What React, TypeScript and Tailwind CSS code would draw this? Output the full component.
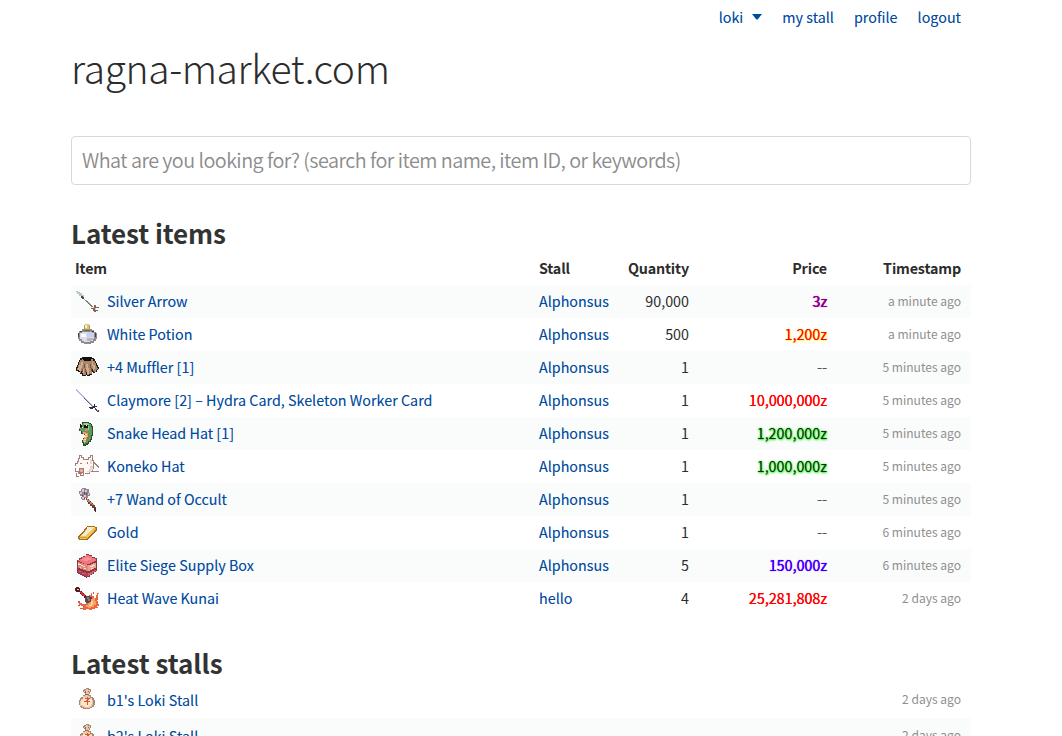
import type { ReactNode } from "react";

function Sprite({ children }: { children: ReactNode }) {
  return (
    <svg className="h-6 w-6 shrink-0" viewBox="0 0 24 24" shapeRendering="crispEdges" fill="none" aria-hidden="true">
      {children}
    </svg>
  );
}

const sprites: Record<string, ReactNode> = {
  arrow: (
    <>
      <path d="M1 1L21 20" stroke="#a5a1a0" strokeWidth="0.9" />
      <path d="M1 1h2v1h2v1h2v2h2v4H7V8H6V6H4V4H2V2H1z" fill="#b9c3c4" />
      <path d="M6 6h2v1h1v2H7V8H6z" fill="#454b50" />
      <path d="M10 10L19 18" stroke="#857c7b" strokeWidth="1.2" />
      <path d="M19 15h2v2h3v1h-3v2h2v1h-2v1h-2v-1h-1v-2h-2v-1h3z" fill="#87605c" />
      <path d="M20 18h1v2h-1zM18 17h1v1h-1z" fill="#e5c6bd" />
    </>
  ),
  potion: (
    <>
      <path d="M7 6h2v2h6V6h2v1h2v2h2v1h1v6h-1v2h-2v2h-3v1H9v-1H6v-2H4v-2H3v-6h1V8h3z" fill="#8d8d91" />
      <path d="M3 10h1v4H3zM20 10h1v4h-1zM5 8h2v1H5zM17 8h2v1h-2z" fill="#3f4147" />
      <path d="M7 9h10v1h2v6h-1v2h-3v1H9v-1H7v-2H5v-6h2z" fill="#dddde6" />
      <path d="M6 11h5v3H6z" fill="#fff" />
      <path d="M12 9h5v2h2v3h-7z" fill="#cecced" />
      <path d="M12 15h6v2h-2v1h-4z" fill="#b5b5c1" />
      <path d="M9 2h6v5H9z" fill="#ad955f" />
      <path d="M10 1h4v5h-4z" fill="#dfc477" />
      <path d="M10 2h2v3h-2z" fill="#fff0b5" />
      <path d="M9 7h6v1H9z" fill="#547163" />
    </>
  ),
  muffler: (
    <>
      <path d="M7 1h10v1h2v1h1v2h1v2h1v2h1v2h1v2h-1v1h-1v2h-2v1h-2v-1h-1v3h-2v1h-3v-1h-1v1H7v-2H5v-2H3v-1H1v-4h1V9h1V6h1V4h1V2h2z" fill="#211a17" />
      <path d="M7 3h2v2h7V3h2v2h2v2h1v3h1v2h1v1h-1v1h-1v2h-2v-1h-1v-2h-1v5h-3v1h-2v-3h-1v3H8v-2H7v-2H6v2H5v-2H4v-1H2v-2h1V9h1V6h1V4h2z" fill="#ab866b" />
      <path d="M6 6h2v3H7v3H6v3H4v-1H3v-2h1V9h2zM11 8h2v4h1v6h-2v-4h-1zM17 6h1v3h2v4h-1v1h-1v-4h-1zM8 13h1v4H8z" fill="#d2ad8e" />
      <path d="M9 8h1v4H9zM7 13h1v3H7zM15 8h1v4h1v3h-1v-3h-1zM10 13h1v3h-1z" fill="#765345" />
      <path d="M8 1h8v3h-1v1H9V4H8z" fill="#0c0e0e" />
    </>
  ),
  claymore: (
    <>
      <path d="M1 1L19 19" stroke="#68637c" strokeWidth="1.2" />
      <path d="M1 0.5L9 8.5" stroke="#bbb7dd" strokeWidth="1" />
      <path d="M8 7L18 17" stroke="#a09bb9" strokeWidth="0.7" />
      <path d="M19 15h1v2h2v1h-2v1h-2v1h-3v-1h-1v-1h4v-1h1z" fill="#302b3f" />
      <path d="M20 19h1v1h1v1h2v2h-2v-1h-1v-1h-1z" fill="#5a3d4d" />
      <path d="M22 21h1v1h-1z" fill="#bd9ca7" />
    </>
  ),
  snake: (
    <>
      <path d="M7 0h7v1h2v1h1v2h1v10h-1v4h-1v2h-2v2h-1v1h-2v1H8v-3H7v-3h1v-2h2v-3H9v-1H6V9H4V6h1V2h2z" fill="#294b30" />
      <path d="M8 1h6v1h2v3h1v8h-1v4h-1v2h-2v2h-2v1H9v-3H8v-1h2v-3h1v-3h-1v-1H7V9H5V6h2V2h1z" fill="#5c9c59" />
      <path d="M9 1h4v1h1v1H9zM13 4h1v4h-1v1h-2V7h2z" fill="#a3d091" />
      <path d="M5 2h2v3H5zM9 3h4v3H9z" fill="#101412" />
      <path d="M6 2h1v1H6zM11 3h1v1h-1zM7 5h1v1H7z" fill="#fff" />
      <path d="M4 6h2v1H4zM10 7h3v2h-3z" fill="#ee7777" />
      <path d="M8 10h3v1h2v4h-1v2h-1v3h-1v1H9v-1H8v-3h1v-2h1v-3H8z" fill="#e5a36b" />
      <path d="M10 12h2v1h-2zM10 14h2v1h-2zM9 17h2v1H9zM9 19h1v1H9z" fill="#ffe0a1" />
      <path d="M13 12h1v3h-1v2h-1v-2h1z" fill="#bf5546" />
    </>
  ),
  koneko: (
    <>
      <path d="M4 1h2v2h2v2h6V3h2V1h1v3h1v4h1v3h3v5h-5v1h-4v2h-3v-1H8v2H6v-2H4v-4H1v-7h1V6h1z" fill="#fff8f5" />
      <path
        d="M3.5 7V3.500H4.500V.5H6.500V2.500H8.500V4.500H13.500V2.500H15.500V.5H17.500V5.500H18.500V13.500H17.500V16.500H14.500V18.500H10M9 17.500H8.500V20.500H5.500V18.500H3.500V16.500H.5V13M.5 11V8.500H2.500V6M18 7.500h1v1h1v1h1v1h1v1h1v1M18 16.500h6"
        stroke="#a38080"
        strokeWidth="1"
      />
      <path d="M5 8h2v1H5zM12 7h1v2h-1zM1 18h1v3h2v1H1zM4 13h5v5H7v1H4z" fill="#a87972" />
      <path d="M5 14h3v3H5z" fill="#eba899" />
      <path d="M15 4h2v5h-2zM15 11h3v4h-2v2h-4v-1h2v-2h1z" fill="#e7d5ce" />
    </>
  ),
  wand: (
    <>
      <path d="M11 10h1v1h2v2h2v2h2v2h2v2h1v5h-1v-1h-1v-3h-2v-2h-2v-2h-2v-2h-1v-2h-1z" fill="#713d37" />
      <path d="M12 11h1v1h2v2h2v2h2v1h-2v-1h-2v-2h-2v-1h-1z" fill="#c58a70" />
      <path d="M7 0h4v1h3v4h1v3h-2v2h-3v2H7v-1H6V9h1V8H5V6H4V3h2V1h1z" fill="#94838f" />
      <path d="M7 1h2v3H7v2H5V4h2zM10 2h2v2h-2zM9 7h2v2H9v2H7V9h2zM13 5h1v2h-1z" fill="#d8c9d4" />
      <path d="M9 4h1v2H9zM11 5h1v2h-1zM7 7h1v1H7zM9 10h1v1H9z" fill="#5e5063" />
      <path d="M19 20h2v4h-1v-2h-1z" fill="#4a2f30" />
    </>
  ),
  gold: (
    <>
      <path d="M12 5h8v1h2v4h-1v1h-1v1h-1v1h-1v1h-1v1h-1v1h-1v1h-1v1h-1v1H4v-1H3v-3h1v-1h1v-1h1v-1h1v-1h1v-1h1V8h1V7h1V6h1z" fill="#a9691f" />
      <path d="M12 6h8v1h1v2h-1v1h-1v1h-1v1h-1v1h-1v1h-1v1h-1v1h-1v1h-1v1H5v-1H4v-1h1v-1h1v-1h1v-1h1v-1h1v-1h1V9h1V8h1z" fill="#efc554" />
      <path d="M12 6h7v1h-1v1h-1v1h-1v1h-1v1h-1v1h-1v1h-1v1h-1v1H6v-1h1v-1h1v-1h1v-1h1v-1h1V9h1z" fill="#f8eab9" />
      <path d="M13 7h4v1h-1v1h-1v1h-1v1h-1v1h-1v1H9v-1h1v-1h1v-1h1V9h1z" fill="#eee9e6" />
      <path d="M4 16h8v1H4zM20 7h1v2h-1v1h-1V9h1z" fill="#d39b32" />
    </>
  ),
  box: (
    <>
      <path d="M11 0h3v1h3v2h3v1h2v13h-1v1h-2v2h-2v1h-2v2h-3v1h-1v-1H9v-1H7v-1H5v-1H3v-1H2V6h2V4h2V3h2V2h3z" fill="#8a3445" />
      <path d="M11 1h3v1h3v2h3v1h1v2h-2v1h-2v1h-2v1h-3v1h-1v-1H9V9H7V8H5V7H3V6h2V5h2V3h3V2h1z" fill="#f0777f" />
      <path d="M11 3h3v1h2v2h-3v1H9V6H7V5h2V4h2z" fill="#fa9295" />
      <path d="M3 8h2v1h3v1h3v1h2v6h-2v-1H8v-1H5v-1H3z" fill="#e88480" />
      <path d="M13 11h3v-1h2V9h3v5h-2v1h-2v1h-2v1h-2z" fill="#ef9f92" />
      <path d="M3 9h1v1h2v1h2v1h2v1H8v-1H6v-1H3zM15 12h2v-1h3v1h-2v1h-3zM5 13h1v1H5zM9 14h2v1H9zM15 15h1v-1h2v1z" fill="#ffe4c2" />
      <path d="M3 16h2v1h3v1h3v1h2v4h-1v-1H9v-1H7v-1H5v-1H3z" fill="#b33d51" />
      <path d="M13 19h2v-1h2v-1h2v-1h2v1h-1v1h-2v2h-2v1h-2v1h-1z" fill="#cf6072" />
      <path d="M4 17h2v1H4zM7 19h4v1H7z" fill="#d15b6b" />
    </>
  ),
  kunai: (
    <>
      <path d="M1 0h3v1h1v3h2v2h2v2h2v3H9V9H7V7H5V5H1V4H0V1h1z" fill="#571c1d" />
      <path d="M2 2h2v1H2z" fill="#eac0ba" />
      <path d="M5 4h1v1h2v2h2v2H8V8H6V6H5z" fill="#d4342d" />
      <path d="M15 8h1V6h1v3h2v2h2V8h1V6h2v1h-1v4h-1v3h1v3h1v2h-2v1h1v1h-3v1h-3v1h-3v-1h-3v1H8v-1H6v-1h2v-2H6v-1H4v-2h3v1h4v-4h2v-4z" fill="#ea6743" />
      <path d="M16 12h2v-1h2v3h1v4h-2v2h-3v1h-3v-1h-2v-2h2v-2h2v-2h1z" fill="#f9a066" />
      <path d="M17 14h1v3h-1v2h-3v-1h2v-4z" fill="#ffdf98" />
      <path d="M11 9h4v1h2v2h-1v3h-2v1h-3v-1h-1v-5h1z" fill="#5a4850" />
      <path d="M12 10h2v2h1v2h-2v-2h-1z" fill="#94777a" />
      <path d="M3 14h2v2H3zM3 18h2v1H3zM18 5h1v2h-1zM22 11h1v2h-1zM5 21h3v1H5z" fill="#c95b49" />
    </>
  ),
  bag: (
    <>
      <path d="M9 1h2V0h3v1h2v3h-1v2h-1v1h2v2h2v1h1v2h1v5h-1v2h-2v1h-2v1H8v-1H6v-1H5v-2H4v-5h1v-2h1V9h2V7h2V5H9V4H8V2h1z" fill="#aa8873" />
      <path d="M10 2h1V1h2v1h2v2h-1v2h-1v2h2v2h2v2h1v5h-1v2h-2v1H9v-1H7v-1H5v-5h1v-2h2V8h2V6h1V4H9V3h1z" fill="#e8c6a7" />
      <path d="M8 10h7v1h2v5h-1v2h-2v1h-4v-1H8v-1H6v-5h2z" fill="#ffe6c8" />
      <path d="M10 3h1v2h-1zM13 3h1v1h-1zM10 6h3v1h-3z" fill="#8c6759" />
      <path d="M10 10h2V9h1v1h2v1h-1v1h-1v1h2v1h-2v3h-1v-3H9v-1h2v-1h1v-1h-2z" fill="#dc5137" />
    </>
  ),
};

const tones: Record<string, string> = {
  purple: "text-[#800080] [text-shadow:0.5px_0_0_#800080,0_0_1px_#ff00ff]",
  orange: "text-[#ff0000] [text-shadow:0.3px_0_0_#ff000066,0_0_1px_#ffdd00,1px_1px_1px_#ffff0099]",
  muted: "text-[#555] [text-shadow:0.3px_0_0_#777]",
  red: "text-[#ff0000] [text-shadow:0.3px_0_0_#ff0000]",
  green: "text-[#222] [text-shadow:0_0_2px_#00ff00,0.5px_0.5px_2px_#00ff00]",
  blue: "text-[#2200ff] [text-shadow:0.3px_0_0_#2200ff99,0_0_1px_#ff00ff]",
};

const items = [
  { icon: "arrow", name: "Silver Arrow", stall: "Alphonsus", qty: "90,000", price: "3z", tone: "purple", time: "a minute ago" },
  { icon: "potion", name: "White Potion", stall: "Alphonsus", qty: "500", price: "1,200z", tone: "orange", time: "a minute ago" },
  { icon: "muffler", name: "+4 Muffler [1]", stall: "Alphonsus", qty: "1", price: "--", tone: "muted", time: "5 minutes ago" },
  { icon: "claymore", name: "Claymore [2] – Hydra Card, Skeleton Worker Card", stall: "Alphonsus", qty: "1", price: "10,000,000z", tone: "red", time: "5 minutes ago" },
  { icon: "snake", name: "Snake Head Hat [1]", stall: "Alphonsus", qty: "1", price: "1,200,000z", tone: "green", time: "5 minutes ago" },
  { icon: "koneko", name: "Koneko Hat", stall: "Alphonsus", qty: "1", price: "1,000,000z", tone: "green", time: "5 minutes ago" },
  { icon: "wand", name: "+7 Wand of Occult", stall: "Alphonsus", qty: "1", price: "--", tone: "muted", time: "5 minutes ago" },
  { icon: "gold", name: "Gold", stall: "Alphonsus", qty: "1", price: "--", tone: "muted", time: "6 minutes ago" },
  { icon: "box", name: "Elite Siege Supply Box", stall: "Alphonsus", qty: "5", price: "150,000z", tone: "blue", time: "6 minutes ago" },
  { icon: "kunai", name: "Heat Wave Kunai", stall: "hello", qty: "4", price: "25,281,808z", tone: "red", time: "2 days ago" },
];

const stalls = [
  { name: "b1's Loki Stall", time: "2 days ago" },
  { name: "b2's Loki Stall", time: "2 days ago" },
];

const columns = "grid h-[33px] grid-cols-[464px_80px_70px_138px_134px] items-center pl-1 pr-2.5";
const link = "text-[#004a9f] tracking-[0.02px] [text-shadow:0_0_0_#004a9f4d]";

export default function App() {
  return (
    <div className="h-[736px] overflow-hidden bg-white font-['Noto_Sans_CJK_JP',sans-serif] text-[14.3px] leading-5 text-[#2c2c2c] whitespace-nowrap">
      <div className="ml-[71px] w-[900px]">
        <nav className="flex h-[34px] items-center justify-end gap-5 pr-2.5">
          <a href="#" className={`flex items-center gap-[9px] ${link}`}>
            loki
            <svg className="h-[6px] w-[10px]" viewBox="0 0 10 6" fill="currentColor" aria-hidden="true">
              <path d="M0 0h10L6 5q-1 1-2 0z" />
            </svg>
          </a>
          <a href="#" className={link}>my stall</a>
          <a href="#" className={link}>profile</a>
          <a href="#" className={link}>logout</a>
        </nav>
        <h1 className="h-[102px] pt-[3px] text-[39px] leading-[60px] font-light tracking-[-0.38px]">ragna-market.com</h1>
        <input
          className="block h-[49px] w-full rounded-[4px] border border-[#d8d8d8] px-2.5 pb-0.5 text-[19.8px] font-[350] tracking-[-0.54px] placeholder:text-[#8c8c8c] placeholder:opacity-100"
          placeholder="What are you looking for? (search for item name, item ID, or keywords)"
        />
        <h2 className="mt-7 h-[38px] text-[26px] leading-10 font-bold tracking-[-0.1px] text-[#333]">Latest items</h2>
        <div className={`${columns} font-bold tracking-[-0.15px]`}>
          <span>Item</span>
          <span>Stall</span>
          <span className="text-right">Quantity</span>
          <span className="text-right">Price</span>
          <span className="text-right">Timestamp</span>
        </div>
        <div className="pt-px">
          {items.map((item) => (
            <div key={item.name} className={`${columns} odd:bg-[#fafbfb]`}>
              <div className="flex items-center gap-2">
                <Sprite>{sprites[item.icon]}</Sprite>
                <a href="#" className={`pb-0.5 ${link}`}>{item.name}</a>
              </div>
              <a href="#" className={`pb-0.5 ${link}`}>{item.stall}</a>
              <span className="pb-0.5 text-right">{item.qty}</span>
              <span className={`pb-0.5 text-right ${tones[item.tone]}`}>{item.price}</span>
              <span className="pb-0.5 text-right text-[12.05px] text-[#8f8f8f]">{item.time}</span>
            </div>
          ))}
        </div>
        <h2 className="mt-7 h-[39px] text-[26px] leading-10 font-bold tracking-[-0.02px] text-[#333]">Latest stalls</h2>
        <div>
          {stalls.map((stall) => (
            <div key={stall.name} className="flex h-9 items-center gap-2 pr-2.5 pl-1 even:bg-[#fafbfb]">
              <Sprite>{sprites.bag}</Sprite>
              <a href="#" className={link}>{stall.name}</a>
              <span className="ml-auto pb-0.5 text-[12.05px] text-[#8f8f8f]">{stall.time}</span>
            </div>
          ))}
        </div>
      </div>
    </div>
  );
}
